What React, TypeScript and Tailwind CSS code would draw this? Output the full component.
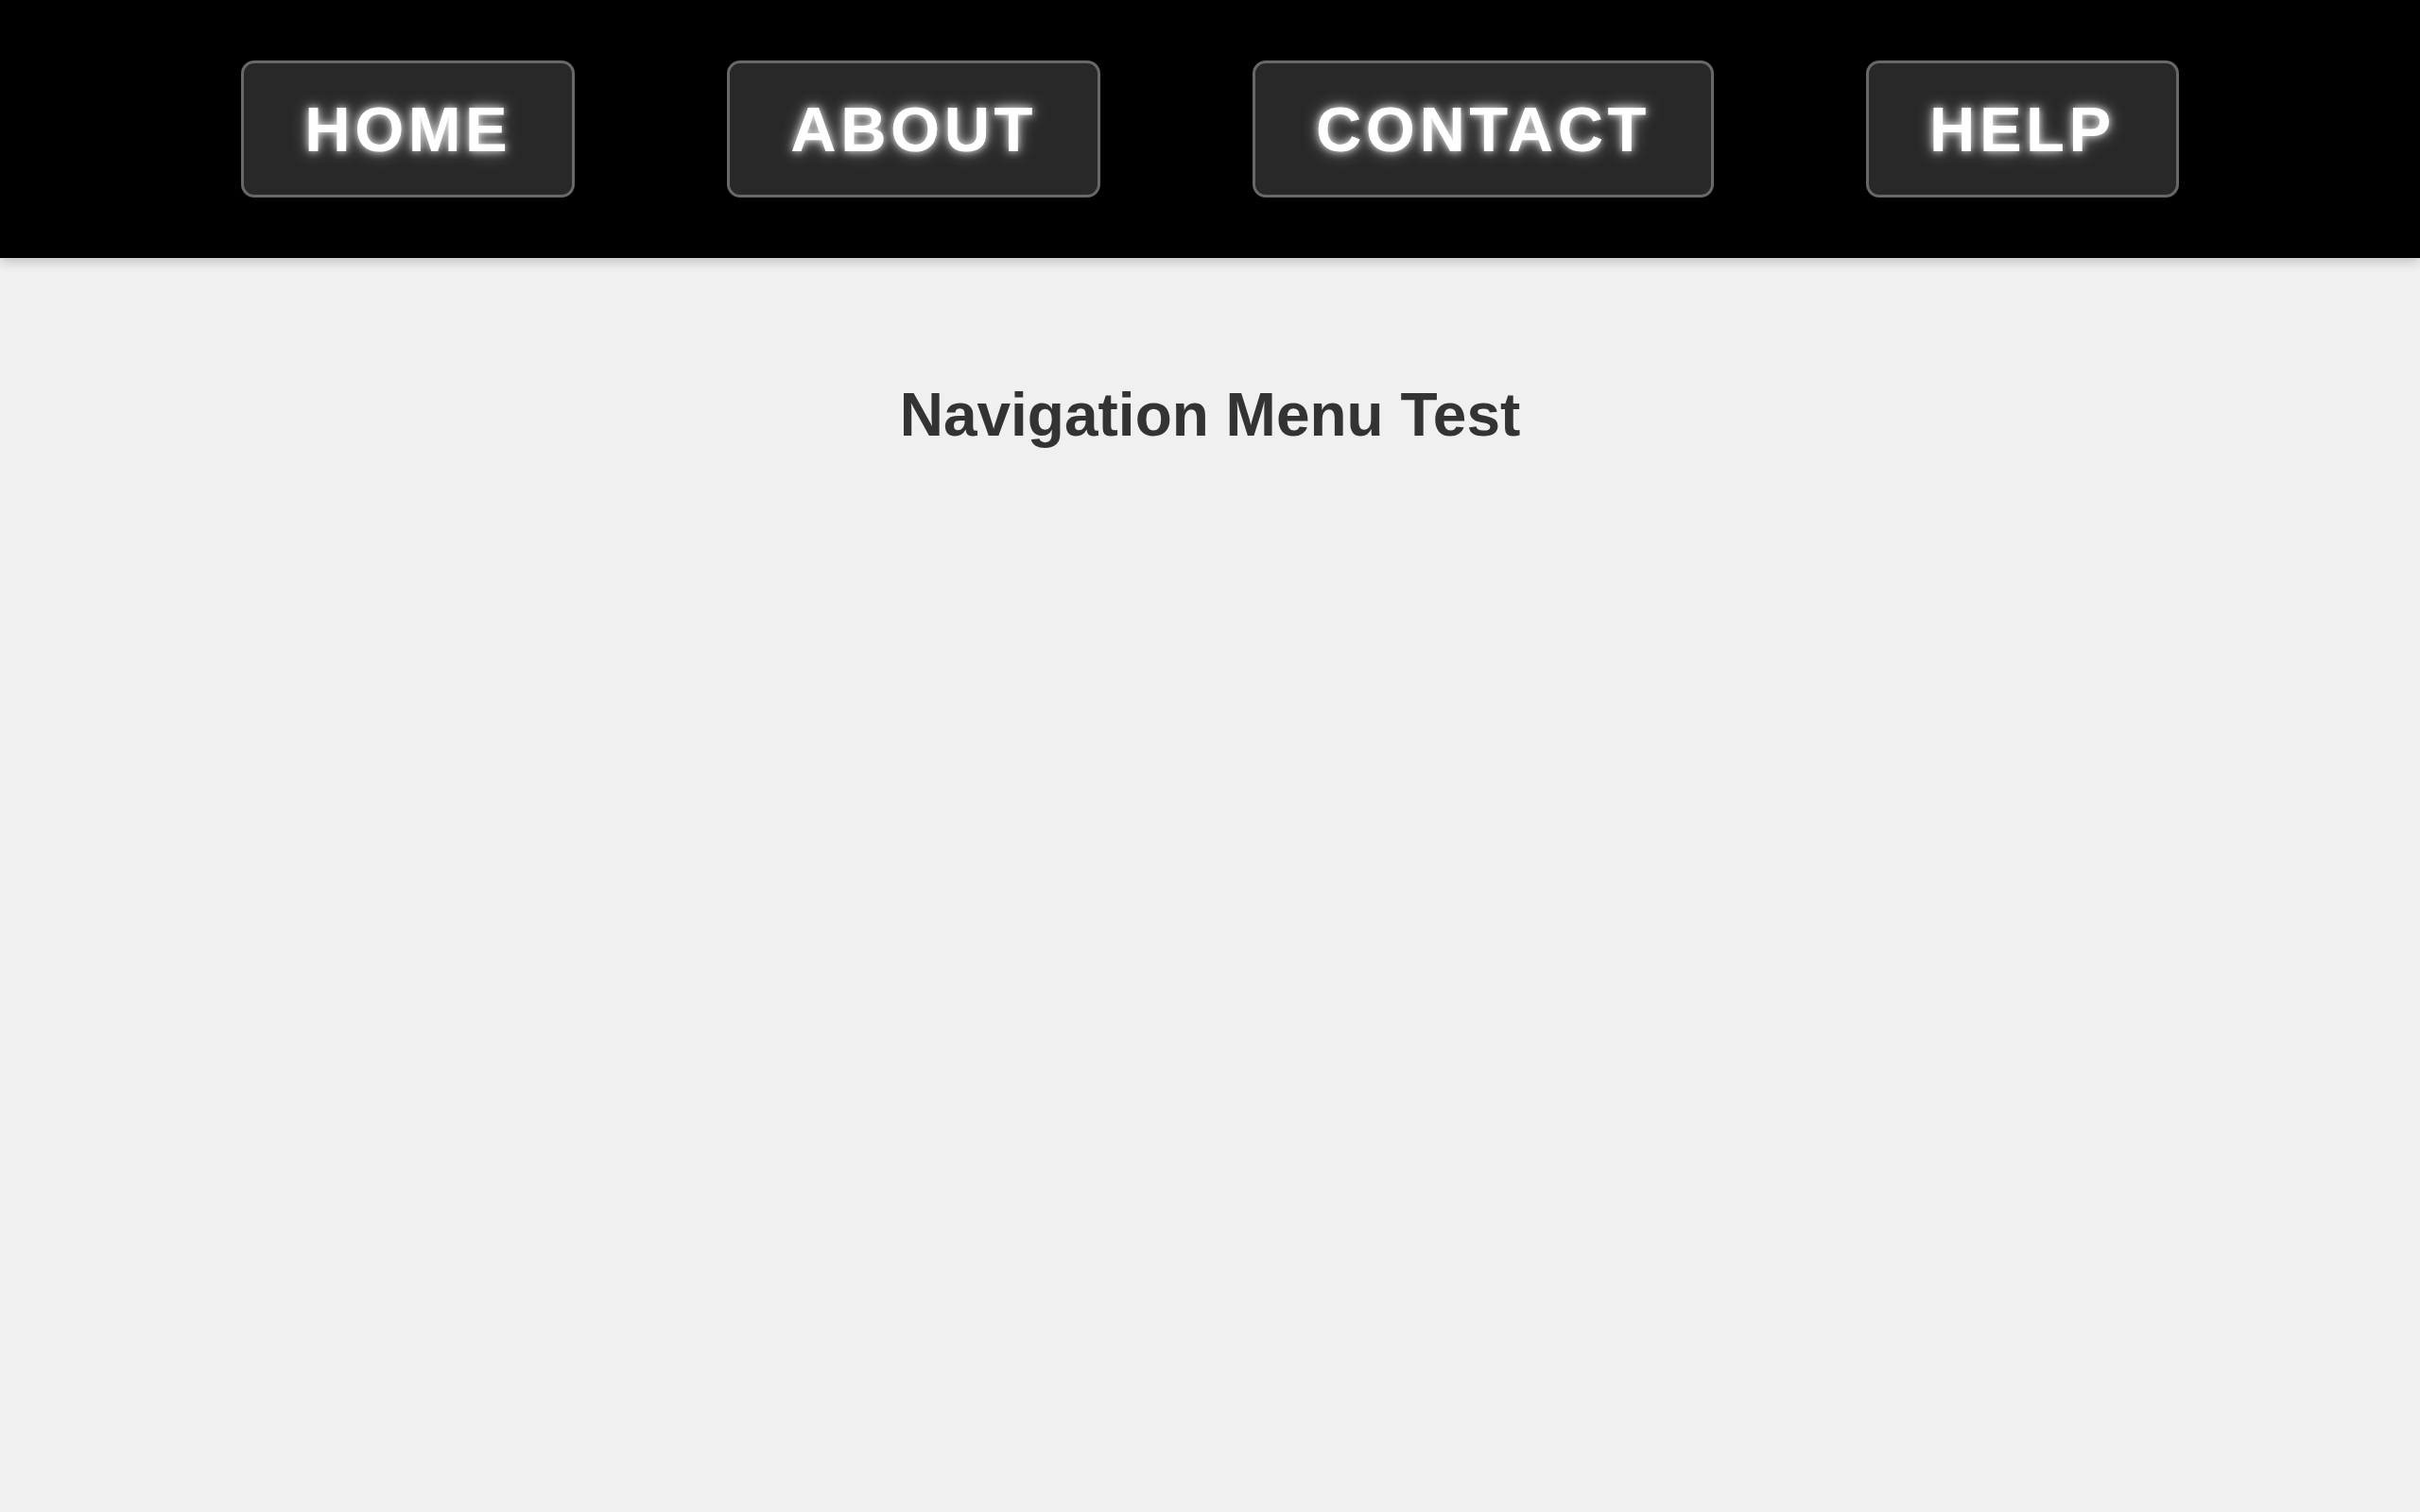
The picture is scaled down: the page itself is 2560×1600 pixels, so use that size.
const items = ['HOME', 'ABOUT', 'CONTACT', 'HELP'];

export default function App() {
    return (
        <div className="min-h-screen bg-[#f0f0f0]" style={{ fontFamily: '"Liberation Sans", Arial, sans-serif' }}>
            <nav className="flex justify-center gap-[161px] bg-black py-[64px] shadow-[0_3px_12px_rgba(0,0,0,0.22)]">
                {items.map((label) => (
                    <a
                        key={label}
                        href="#"
                        className="rounded-[14px] border-[3px] border-[#686868] bg-[#282828] px-[64px] py-[31px] text-[67px] font-bold leading-[77px] tracking-[4.5px] text-white [text-shadow:0_0_9px_rgba(255,255,255,0.9),0_0_18px_rgba(255,255,255,0.5)]"
                    >
                        {label}
                    </a>
                ))}
            </nav>

            <main className="pt-[118px]">
                <h1 className="text-center text-[64px] font-bold text-[#333333]">Navigation Menu Test</h1>
            </main>
        </div>
    );
}
